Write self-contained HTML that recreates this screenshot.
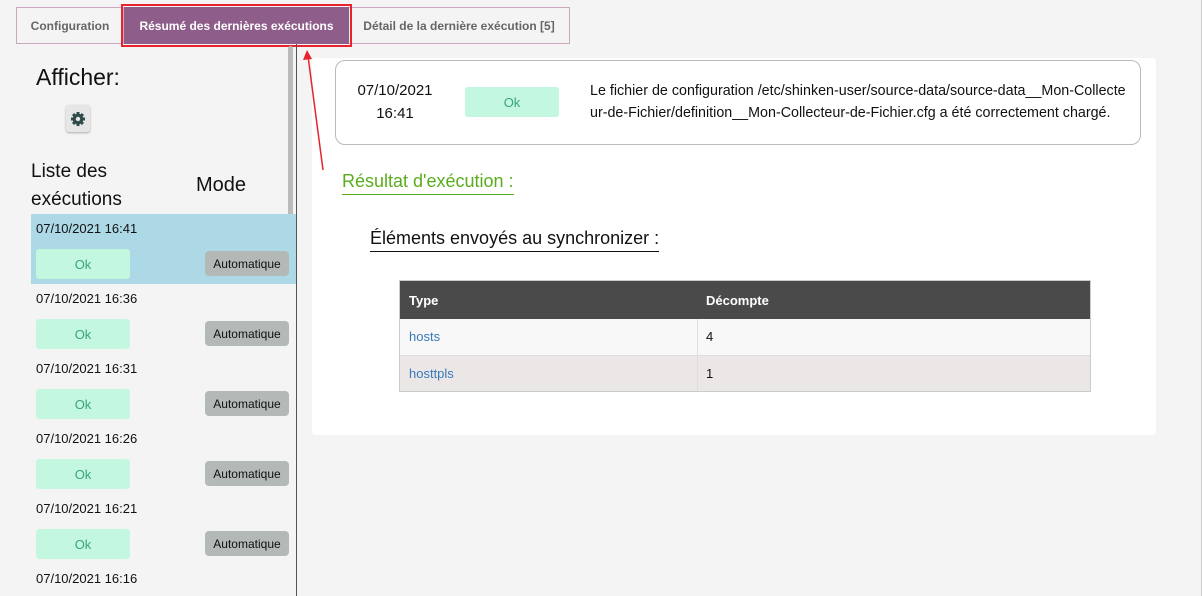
<!DOCTYPE html>
<html><head><meta charset="utf-8"><style>
*{margin:0;padding:0;box-sizing:border-box}
body{width:1202px;height:596px;background:#f4f4f4;font-family:"Liberation Sans",Arial,sans-serif;position:relative;overflow:hidden;border-right:1px solid #ccc}
.a{position:absolute}
.tab{position:absolute;top:7px;height:37px;border:1px solid #c9a8bd;background:#f4f4f4;font-size:12px;font-weight:bold;color:#666;display:flex;align-items:center;justify-content:center}
.ok{position:absolute;background:#c4f7e0;color:#3aa47a;font-size:13px;border-radius:3px;display:flex;align-items:center;justify-content:center}
.au{position:absolute;left:205px;width:84px;height:25px;background:#b2b9b6;border-radius:4px;font-size:12px;color:#111;display:flex;align-items:center;justify-content:center}
.dt{position:absolute;left:36px;font-size:13px;color:#111}
</style></head><body>
<div class="tab" style="left:16px;width:108px">Configuration</div>
<div class="tab" style="left:348px;width:222px">Détail de la dernière exécution [5]</div>
<div class="a" style="left:121px;top:4px;width:231px;height:43px;border:2px solid #e8232e"></div>
<div class="tab" style="left:124px;top:7px;width:225px;height:37px;background:#8e5d8a;color:#fff;border:1px solid #8e5d8a">Résumé des dernières exécutions</div>
<div class="a" style="left:296px;top:44px;width:1px;height:552px;background:#555"></div>
<div class="a" style="left:288px;top:46px;width:5px;height:172px;background:#bbb;border-radius:3px"></div>
<div class="a" style="left:36px;top:64px;font-size:23px;color:#111">Afficher:</div>
<div class="a" style="left:66px;top:105px;width:24px;height:27px;background:#e6e6e6;border-radius:3px;box-shadow:0 1px 2px #aaa;display:flex;align-items:center;justify-content:center">
<svg width="16" height="16" viewBox="0 0 16 16"><g fill="#2f4a4a"><circle cx="8" cy="8" r="5.3"/><rect x="6.5" y="1" width="3" height="14"/><rect x="1" y="6.5" width="14" height="3"/><rect x="6.5" y="1" width="3" height="14" transform="rotate(45 8 8)"/><rect x="6.5" y="1" width="3" height="14" transform="rotate(-45 8 8)"/></g><circle cx="8" cy="8" r="2.2" fill="#e6e6e6"/></svg></div>
<div class="a" style="left:31px;top:158px;font-size:19px;line-height:28px;color:#111">Liste des<br>exécutions</div>
<div class="a" style="left:196px;top:174px;font-size:20px;color:#111">Mode</div>
<div class="a" style="left:31px;top:214px;width:265px;height:70px;background:#add8e6"></div>
<div class="dt" style="top:221px">07/10/2021 16:41</div><div class="ok" style="left:36px;top:249px;width:94px;height:30px">Ok</div><div class="au" style="top:251px">Automatique</div>
<div class="dt" style="top:291px">07/10/2021 16:36</div><div class="ok" style="left:36px;top:319px;width:94px;height:30px">Ok</div><div class="au" style="top:321px">Automatique</div>
<div class="dt" style="top:361px">07/10/2021 16:31</div><div class="ok" style="left:36px;top:389px;width:94px;height:30px">Ok</div><div class="au" style="top:391px">Automatique</div>
<div class="dt" style="top:431px">07/10/2021 16:26</div><div class="ok" style="left:36px;top:459px;width:94px;height:30px">Ok</div><div class="au" style="top:461px">Automatique</div>
<div class="dt" style="top:501px">07/10/2021 16:21</div><div class="ok" style="left:36px;top:529px;width:94px;height:30px">Ok</div><div class="au" style="top:531px">Automatique</div>
<div class="dt" style="top:571px">07/10/2021 16:16</div>
<div class="a" style="left:312px;top:58px;width:844px;height:377px;background:#fff;border-radius:3px"></div>
<div class="a" style="left:335px;top:60px;width:806px;height:85px;border:1px solid #bbb;border-radius:10px;background:#fff"></div>
<div class="a" style="left:350px;top:79px;width:90px;text-align:center;font-size:15px;line-height:23px;color:#111">07/10/2021<br>16:41</div>
<div class="ok" style="left:465px;top:87px;width:94px;height:30px">Ok</div>
<div class="a" style="left:590px;top:80px;font-size:14.3px;line-height:22px;color:#111;width:545px;white-space:nowrap">Le fichier de configuration /etc/shinken-user/source-data/source-data__Mon-Collecte<br>ur-de-Fichier/definition__Mon-Collecteur-de-Fichier.cfg a été correctement chargé.</div>
<div class="a" style="left:342px;top:171px;font-size:18px;color:#59ad1c;border-bottom:1px solid #59ad1c;padding-bottom:2px">Résultat d'exécution :</div>
<div class="a" style="left:370px;top:228px;font-size:18px;color:#111;border-bottom:1px solid #111;padding-bottom:2px">Éléments envoyés au synchronizer :</div>
<div class="a" style="left:399px;top:280px;width:692px;height:112px;border:1px solid #ccc">
<div style="height:38px;background:#4a4a4a;color:#fff;font-size:13px;font-weight:bold;display:flex;align-items:center"><span style="width:298px;padding-left:9px">Type</span><span style="padding-left:8px">Décompte</span></div>
<div style="height:37px;background:#f8f8f8;display:flex;font-size:13px;border-bottom:1px solid #ddd"><span style="width:298px;padding-left:9px;color:#3a78b8;border-right:1px solid #ddd;line-height:36px">hosts</span><span style="padding-left:8px;line-height:36px;color:#111">4</span></div>
<div style="height:35px;background:#ebe7e7;display:flex;font-size:13px"><span style="width:298px;padding-left:9px;color:#3a78b8;border-right:1px solid #ddd;line-height:35px">hosttpls</span><span style="padding-left:8px;line-height:35px;color:#111">1</span></div>
</div>
<svg class="a" style="left:300px;top:48px" width="30" height="125"><line x1="23" y1="122" x2="8" y2="8" stroke="#e8232e" stroke-width="1.5"/><polygon points="7,2 3,12 12,11" fill="#e8232e"/></svg>
</body></html>
